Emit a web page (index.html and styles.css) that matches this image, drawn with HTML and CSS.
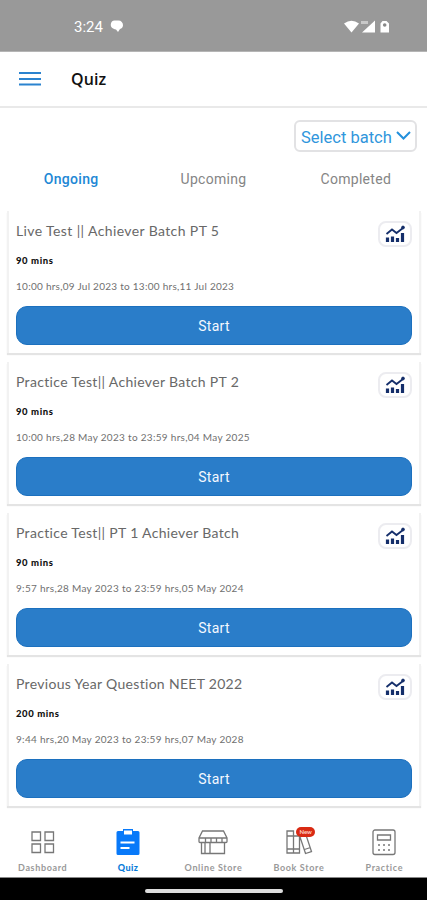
FILE: index.html
```html
<!DOCTYPE html>
<html lang="en">
<head>
<meta charset="utf-8">
<title>Quiz</title>
<link rel="stylesheet" href="styles.css">
</head>
<body>
<svg class="defs" width="0" height="0">
  <symbol id="chart" viewBox="0 0 20 18">
    <path d="M2.500 12.500v4.500M7.500 11.500v5.500M12.500 13v4M17.500 8v9" stroke-width="3.200"/>
    <path d="M1.500 9l5.500-4.500 4.500 3.500 6.500-5" stroke-width="1.800"/>
    <circle cx="18" cy="2.500" r="1.400"/>
  </symbol>
</svg>
<div class="status">
  <span class="time">3:24</span>
  <svg class="bubble" width="14" height="13" viewBox="0 0 14 13"><path d="M4.500.5h4a4.500 4.500 0 0 1 4.500 4.700c0 2-1.300 3.300-3 3.800l-2 3-2-2.500C2.500 9 .5 7 .8 4.300 1 2 2.500.5 4.500.5z" fill="#fff"/></svg>
  <svg class="signals" width="46" height="14" viewBox="0 0 46 14"><path d="M0 3.500Q7.500-2 15 3.500L7.500 12.500zM18 12.500L31 .5v12zM36.500 3.500l2-2.500h4l2.500 2.500v9h-8.500z" fill="#fff"/><path d="M17 1h7v3h-7z" fill="#c8c8c8"/><circle cx="40.700" cy="5" r="1.800" fill="#888"/></svg>
</div>
<header class="bar">
  <svg width="22" height="16" viewBox="0 0 22 16"><path d="M0 2h22M0 8h22M0 13.500h22" stroke="#2b83cf" stroke-width="2.200"/></svg>
  <h1>Quiz</h1>
</header>
<main>
  <button class="select"><span>Select batch</span><svg width="15" height="9" viewBox="0 0 15 9"><path d="M1 1l6.500 6.500L14 1" fill="none" stroke="#2390dc" stroke-width="2"/></svg></button>
  <nav class="tabs"><span class="on">Ongoing</span><span>Upcoming</span><span>Completed</span></nav>
  <section class="card">
    <div class="head"><h2 class="t1">Live Test || Achiever Batch PT 5</h2><span class="stat"><svg width="20" height="18"><use href="#chart"/></svg></span></div>
    <b class="mins">90 mins</b>
    <p class="d1">10:00 hrs,09 Jul 2023 to 13:00 hrs,11 Jul 2023</p>
    <button class="start">Start</button>
  </section>
  <section class="card">
    <div class="head"><h2 class="t2">Practice Test|| Achiever Batch PT 2</h2><span class="stat"><svg width="20" height="18"><use href="#chart"/></svg></span></div>
    <b class="mins">90 mins</b>
    <p class="d2">10:00 hrs,28 May 2023 to 23:59 hrs,04 May 2025</p>
    <button class="start">Start</button>
  </section>
  <section class="card">
    <div class="head"><h2 class="t3">Practice Test|| PT 1 Achiever Batch</h2><span class="stat"><svg width="20" height="18"><use href="#chart"/></svg></span></div>
    <b class="mins">90 mins</b>
    <p class="d3">9:57 hrs,28 May 2023 to 23:59 hrs,05 May 2024</p>
    <button class="start">Start</button>
  </section>
  <section class="card">
    <div class="head"><h2 class="t4">Previous Year Question NEET 2022</h2><span class="stat"><svg width="20" height="18"><use href="#chart"/></svg></span></div>
    <b class="mins">200 mins</b>
    <p class="d4">9:44 hrs,20 May 2023 to 23:59 hrs,07 May 2028</p>
    <button class="start">Start</button>
  </section>
</main>
<footer class="dock">
  <div class="item"><svg width="32" height="30" viewBox="0 0 32 30"><path d="M5 4h8.500v8.500H5zM18 4h8.500v8.500H18zM5 16h8.500v8.500H5zM18 16h8.500v8.500H18z"/></svg><span>Dashboard</span></div>
  <div class="item on"><svg width="32" height="30" viewBox="0 0 32 30"><path class="solid" d="M6 3h5V1h10v2h5a1.500 1.500 0 0 1 1.500 1.500v21A1.500 1.500 0 0 1 26 27H6a1.500 1.500 0 0 1-1.500-1.500v-21A1.500 1.500 0 0 1 6 3z"/><path class="white" d="M12 2.500h8v4h-8z"/><path class="line" d="M8.500 14.500h14M8.500 20h9"/></svg><span>Quiz</span></div>
  <div class="item"><svg width="32" height="30" viewBox="0 0 32 30"><path d="M5.500 3h21l3.500 7v3.500q0 1-1 1H3q-1 0-1-1V10zM2 10h28M8.500 14V10M14 14V10M19.500 14V10M25 14V10M4.500 14.500v11h23v-11M13 14.500v11M8 14.500v11"/></svg><span>Online Store</span></div>
  <div class="item"><svg width="32" height="30" viewBox="0 0 32 30"><path d="M4 3h6.500v22H4zM10.500 8h6v17h-6zM4 8h6.500M4 21h12.500M17 9l6-2 5.500 16.500-6 2zM21.500 21.500l6-2"/></svg><em>New</em><span>Book Store</span></div>
  <div class="item"><svg width="32" height="30" viewBox="0 0 32 30"><rect x="5" y="2" width="22" height="24.500" rx="2"/><path d="M9.500 7h13v5h-13z"/><path d="M10 17h2M15 17h2M20 17h2M10 22h2M15 22h2M20 22h2"/></svg><span>Practice</span></div>
</footer>
<div class="gesture"><i></i></div>
</body>
</html>
```

FILE: styles.css
```css
* { box-sizing: border-box; }
body { margin: 0; width: 427px; height: 900px; overflow: hidden; background: #fff; font-family: Lato, sans-serif; display: flex; flex-direction: column; }
.defs { position: absolute; }
h1, h2, p { margin: 0; font-weight: 400; white-space: nowrap; }
button { font-family: Roboto, sans-serif; padding: 0; }
.status { height: 52px; flex: none; background: #999; border-bottom: 1px solid #b5b5b5; display: flex; align-items: center; padding: 2px 37px 0 74px; color: #fff; font: 15px Roboto, sans-serif; }
.bubble { margin-left: 7px; }
.signals { margin-left: auto; }
.bar { height: 56px; flex: none; display: flex; align-items: center; padding: 0 19px; border-bottom: 2px solid #e9e9e9; }
.bar h1 { margin: -1px 0 0 30px; font: 600 16px "Open Sans", sans-serif; color: #111; letter-spacing: .1px; }
main { flex: 1; min-height: 0; display: flex; flex-direction: column; }
.select { align-self: flex-end; flex: none; margin: 12px 10px 0 0; width: 123px; height: 32px; border: 2px solid #e2e2e4; border-radius: 6px; background: #fff; color: #3096dc; font-size: 16.500px; display: flex; align-items: center; justify-content: space-between; padding: 2px 4px 0 5px; white-space: nowrap; }
.select svg { margin-top: -4px; }
.tabs { height: 58px; flex: none; display: grid; grid-template-columns: repeat(3, 1fr); text-align: center; line-height: 54px; font-family: Roboto, sans-serif; font-size: 14px; letter-spacing: .3px; color: #858585; }
.tabs .on { color: #2187d5; font-weight: 500; }
.card { height: 142px; flex: none; margin: 0 6px 9px 7px; padding: 10px 7px 0; background: #fff; border: solid #f2f2f2; border-width: 0 2px; box-shadow: 0 2px 1px #e4e4e4; }
.tabs + .card { margin-top: 1px; }
.card:last-child { margin-bottom: 0; }
.head { display: flex; justify-content: space-between; height: 32px; }
.head h2 { font-size: 14px; line-height: 20px; color: #686868; }
.t1 { letter-spacing: .39px; }
.t2, .t3 { letter-spacing: .33px; }
.t4 { letter-spacing: .31px; }
.stat { width: 34px; height: 26px; border: 2px solid #ececf0; border-radius: 8px; display: grid; place-items: center; }
.stat svg { fill: #142e6a; stroke: #142e6a; }
#chart path { fill: none; }
.mins { display: block; height: 26px; font-size: 9.500px; line-height: 16px; font-weight: 900; color: #111; letter-spacing: .6px; }
.card p { height: 27px; font-size: 10px; line-height: 14px; color: #707070; letter-spacing: .27px; }
.card .d2, .card .d3, .card .d4 { letter-spacing: .3px; }
.start { width: 100%; height: 39px; display: block; border: 1px solid #1c70be; border-radius: 11px; background: #2a7dc9; color: #f4f8ff; font-size: 14px; letter-spacing: .3px; }
.dock { height: 66px; flex: none; display: grid; grid-template-columns: repeat(5, 1fr); padding-top: 16px; border-bottom: 1px solid #888; }
.item { position: relative; display: flex; flex-direction: column; align-items: center; }
.item svg { fill: none; stroke: #777; stroke-width: 1.300; flex: none; }
.item span { font-size: 9px; font-weight: 700; line-height: 14px; margin-top: 3px; color: #999; white-space: nowrap; letter-spacing: .65px; }
.item.on span { color: #087bd9; font-weight: 900; letter-spacing: .4px; }
.item .solid { fill: #0879f9; stroke: none; }
.item .white { fill: #fff; stroke: none; }
.item .line { stroke: #fff; stroke-width: 2; }
.item em { position: absolute; left: 40px; top: -1px; width: 19px; height: 10px; border-radius: 5px; background: #d92a13; color: #ffd5ca; font: 700 6px/10px Lato, sans-serif; text-align: center; }
.gesture { height: 22px; flex: none; background: #000; display: grid; place-items: center; padding-top: 3px; }
.gesture i { width: 138px; height: 4px; border-radius: 2px; background: #ddd; }
```
